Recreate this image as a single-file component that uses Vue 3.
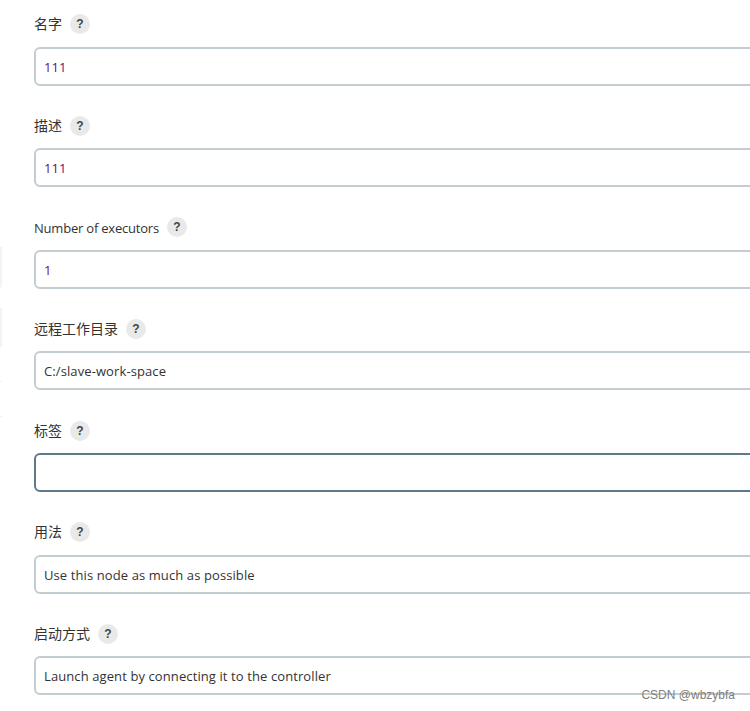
<script setup>
const fields = [
  { label: '名字', value: '111', tone: 'filled' },
  { label: '描述', value: '111', tone: 'filled' },
  { label: 'Number of executors', value: '1', tone: 'filled', latin: true },
  { label: '远程工作目录', value: 'C:/slave-work-space' },
  { label: '标签', value: '', tone: 'focused' },
  { label: '用法', value: 'Use this node as much as possible' },
  { label: '启动方式', value: 'Launch agent by connecting it to the controller' }
]

// leftovers of the cropped side panel along the left edge
const edgeMarks = [
  { top: 247, height: 39 },
  { top: 287, height: 1 },
  { top: 308, height: 39 },
  { top: 381, height: 1 },
  { top: 416, height: 1 }
]
</script>

<template>
  <div class="page">
    <form class="config-form">
      <div v-for="field in fields" :key="field.label" class="field">
        <div class="field-label">
          <span :class="{ latin: field.latin }">{{ field.label }}</span>
          <span class="help">?</span>
        </div>
        <input class="field-input" :class="field.tone" type="text" :value="field.value" readonly />
      </div>
    </form>
    <i
      v-for="mark in edgeMarks"
      :key="mark.top"
      class="edge-mark"
      :style="{ top: mark.top + 'px', height: mark.height + 'px' }"
    ></i>
    <div class="watermark">CSDN @wbzybfa</div>
  </div>
</template>

<style>
html, body {
  margin: 0;
  background: #fff;
}
</style>

<style scoped>
.page {
  position: relative;
  width: 750px;
  height: 711px;
  overflow: hidden;
  background: #fff;
  font-family: "Open Sans", "Noto Sans CJK SC", sans-serif;
  color: #333;
}

.config-form {
  display: flex;
  flex-direction: column;
  gap: 30.2px;
  width: 760px;
  padding: 14.3px 0 0 34px;
}

.field {
  display: flex;
  flex-direction: column;
  gap: 12.4px;
}

.field-label {
  display: flex;
  align-items: center;
  gap: 8px;
  height: 20px;
  font-size: 14px;
  line-height: 20px;
}

.latin {
  padding-top: 1px;
  font-size: 13px;
  letter-spacing: -0.21px;
}

.help {
  display: flex;
  align-items: center;
  justify-content: center;
  width: 20px;
  height: 20px;
  border-radius: 50%;
  background: #e9e9e9;
  color: #444;
  font-family: "Liberation Sans", sans-serif;
  font-size: 12px;
  font-weight: 700;
}

.field-input {
  box-sizing: border-box;
  display: block;
  width: 100%;
  height: 39px;
  padding: 1px 8px 0;
  border: 2px solid #c3ccd1;
  border-radius: 6px;
  outline: none;
  background: #fff;
  color: #333;
  font-family: inherit;
  font-size: 13px;
  letter-spacing: 0.1px;
}

.field-input.filled {
  color: #66106e;
}

.field-input.focused {
  border-color: #5d7a8a;
}

.edge-mark {
  position: absolute;
  left: 0;
  width: 2px;
  background: #f3f3f3;
}

.watermark {
  position: absolute;
  right: 15px;
  top: 687px;
  color: #808080;
  font-family: "Liberation Sans", sans-serif;
  font-size: 12px;
  line-height: 16px;
}
</style>
